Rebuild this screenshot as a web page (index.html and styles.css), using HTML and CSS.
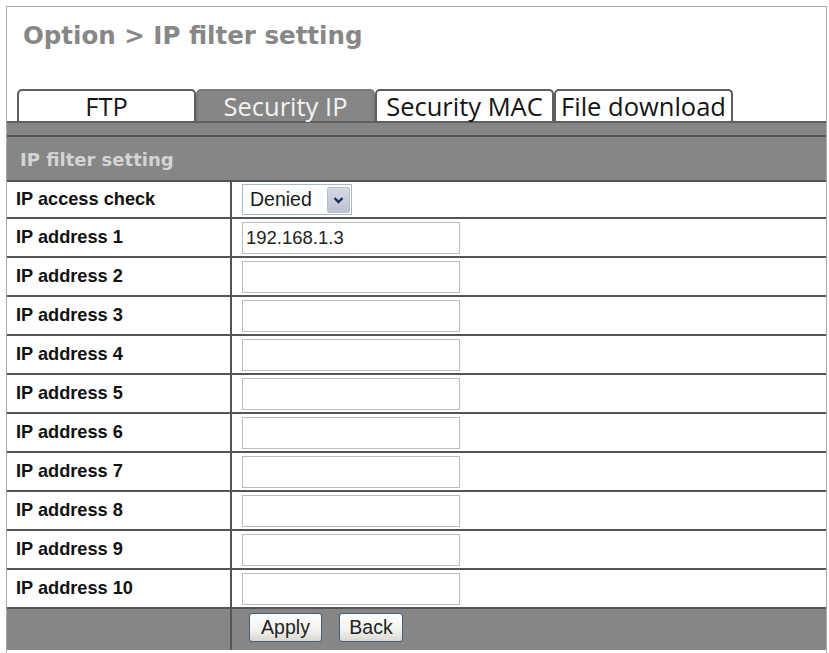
FILE: index.html
```html
<!DOCTYPE html>
<html>
<head>
<meta charset="utf-8">
<title>IP filter setting</title>
<link rel="stylesheet" href="styles.css">
</head>
<body>
<div class="panel">
  <h1 class="title">Option &gt; IP filter setting</h1>
  <div class="tabs">
    <div class="tab">FTP</div>
    <div class="tab active">Security IP</div>
    <div class="tab">Security MAC</div>
    <div class="tab">File download</div>
  </div>
  <div class="tabbar"></div>
  <div class="section-head">IP filter setting</div>
  <div class="form">
    <div class="row first">
      <div class="label">IP access check</div>
      <div class="value">
        <div class="select">
          <span class="select-text">Denied</span>
          <span class="select-btn"><svg width="11" height="8" viewBox="0 0 11 8"><path d="M1.5 2 L5.5 6 L9.5 2" fill="none" stroke="#1f2d55" stroke-width="2.4"/></svg></span>
        </div>
      </div>
    </div>
    <div class="row"><div class="label">IP address 1</div><div class="value"><input class="field" type="text" value="192.168.1.3"></div></div>
    <div class="row"><div class="label">IP address 2</div><div class="value"><input class="field" type="text" value=""></div></div>
    <div class="row"><div class="label">IP address 3</div><div class="value"><input class="field" type="text" value=""></div></div>
    <div class="row"><div class="label">IP address 4</div><div class="value"><input class="field" type="text" value=""></div></div>
    <div class="row"><div class="label">IP address 5</div><div class="value"><input class="field" type="text" value=""></div></div>
    <div class="row"><div class="label">IP address 6</div><div class="value"><input class="field" type="text" value=""></div></div>
    <div class="row"><div class="label">IP address 7</div><div class="value"><input class="field" type="text" value=""></div></div>
    <div class="row"><div class="label">IP address 8</div><div class="value"><input class="field" type="text" value=""></div></div>
    <div class="row"><div class="label">IP address 9</div><div class="value"><input class="field" type="text" value=""></div></div>
    <div class="row"><div class="label">IP address 10</div><div class="value"><input class="field" type="text" value=""></div></div>
    <div class="row actions">
      <div class="label"></div>
      <div class="value">
        <button class="btn btn-apply" type="button">Apply</button>
        <button class="btn btn-back" type="button">Back</button>
      </div>
    </div>
  </div>
</div>
</body>
</html>
```
FILE: styles.css
```css
html, body {
  margin: 0;
  padding: 0;
  background: #ffffff;
}

.panel {
  margin: 6px 0 0 6px;
  width: 821px;
  height: 647px;
  box-sizing: border-box;
  border: 1px solid #a8a8a8;
  border-bottom: none;
  overflow: hidden;
}

.title {
  margin: 0;
  padding: 14px 0 0 16px;
  font-family: "DejaVu Sans", sans-serif;
  font-weight: bold;
  font-size: 24.5px;
  line-height: 30px;
  color: #878787;
}

.tabs {
  display: flex;
  margin-top: 38px;
  padding-left: 10px;
  height: 32px;
}

.tab {
  width: 179px;
  height: 32px;
  box-sizing: border-box;
  border: 2px solid #5e5e5e;
  border-bottom: none;
  border-radius: 5px 5px 0 0;
  background: #ffffff;
  font-family: "Open Sans", sans-serif;
  font-size: 25.5px;
  line-height: 30px;
  text-align: center;
  color: #141414;
  white-space: nowrap;
}

.tab.active {
  background: #868686;
  border-color: #7a7a7a;
  color: #f2f2f2;
}

.tabbar {
  height: 12px;
  background: #868686;
  border-top: 2px solid #5f5f5f;
  border-bottom: 2px solid #555555;
}

.section-head {
  height: 45px;
  box-sizing: border-box;
  padding: 2px 0 0 13px;
  background: #868686;
  border-bottom: 2px solid #555555;
  font-family: "DejaVu Sans", sans-serif;
  font-weight: bold;
  font-size: 18px;
  line-height: 41px;
  color: #d4d4d4;
}

.row {
  display: flex;
  height: 37px;
  border-bottom: 2px solid #555555;
  background: #ffffff;
}

.row.first {
  height: 35px;
}

.label {
  width: 225px;
  box-sizing: border-box;
  padding-left: 9px;
  border-right: 2px solid #555555;
  display: flex;
  align-items: center;
  font-family: "Liberation Sans", Arial, sans-serif;
  font-weight: bold;
  font-size: 18.2px;
  color: #111111;
}

.value {
  flex: 1;
  display: flex;
  align-items: center;
  padding-left: 10px;
}

.field {
  width: 218px;
  height: 32px;
  box-sizing: border-box;
  margin: 0;
  padding: 0 3px;
  border: 1px solid #bcbcbc;
  background: #ffffff;
  font-family: "Liberation Sans", Arial, sans-serif;
  font-size: 18.5px;
  color: #222222;
  outline: none;
}

.select {
  display: flex;
  align-items: center;
  width: 110px;
  height: 31px;
  box-sizing: border-box;
  border: 1px solid #a9b8cc;
  background: #ffffff;
}

.select-text {
  flex: 1;
  padding-left: 7px;
  font-family: "Liberation Sans", Arial, sans-serif;
  font-size: 19.5px;
  color: #1a1a1a;
}

.select-btn {
  width: 23px;
  height: 26px;
  margin-right: 1px;
  box-sizing: border-box;
  border: 1px solid #b7bfcf;
  border-radius: 2px;
  background: linear-gradient(#d4d9e4, #bcc3d2);
  display: flex;
  align-items: center;
  justify-content: center;
}

.row.actions {
  height: 41px;
  background: #868686;
  border-bottom: none;
}

.row.actions .label {
  background: #868686;
}

.row.actions .value {
  padding-left: 17px;
  gap: 17px;
  padding-bottom: 4px;
}

.btn {
  height: 29px;
  margin: 0;
  padding: 0;
  box-sizing: border-box;
  border: 1px solid #465d80;
  border-radius: 3px;
  background: linear-gradient(#ffffff, #f1f1ee 60%, #d9d7cf);
  font-family: "Liberation Sans", Arial, sans-serif;
  font-size: 19.5px;
  color: #222222;
}

.btn-apply {
  width: 73px;
}

.btn-back {
  width: 64px;
}
```
